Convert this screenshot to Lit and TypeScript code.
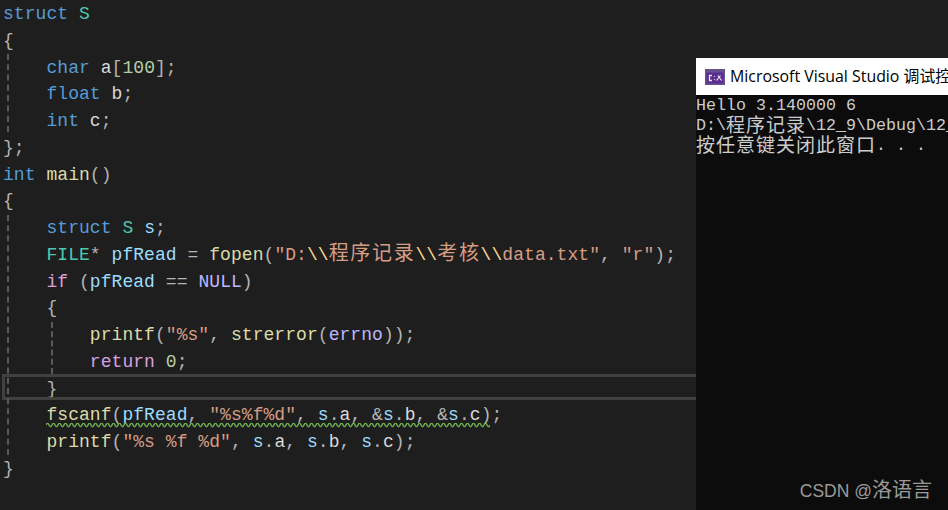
import { LitElement, html, css } from "lit";
import { customElement } from "lit/decorators.js";

type Tok = [string, string];
const K = "k", T = "t", F = "f", S = "s", V = "v", M = "m", C = "c", N = "n", P = "p", D = "d", E = "e", Z = "z";

const code: Tok[][] = [
  [[K, "struct"], [D, " "], [T, "S"]],
  [[P, "{"]],
  [[D, "    "], [K, "char"], [D, " a"], [P, "["], [N, "100"], [P, "];"]],
  [[D, "    "], [K, "float"], [D, " b"], [P, ";"]],
  [[D, "    "], [K, "int"], [D, " c"], [P, ";"]],
  [[P, "};"]],
  [[K, "int"], [D, " "], [F, "main"], [P, "()"]],
  [[P, "{"]],
  [[D, "    "], [K, "struct"], [D, " "], [T, "S"], [D, " "], [V, "s"], [P, ";"]],
  [[D, "    "], [T, "FILE"], [P, "*"], [D, " "], [V, "pfRead"], [D, " "], [P, "="], [D, " "], [F, "fopen"], [P, "("],
    [S, '"D:'], [E, "\\\\"], [Z, "程序记录"], [E, "\\\\"], [Z, "考核"], [E, "\\\\"], [S, 'data.txt"'], [P, ","], [D, " "], [S, '"r"'], [P, ");"]],
  [[D, "    "], [C, "if"], [D, " "], [P, "("], [V, "pfRead"], [D, " "], [P, "=="], [D, " "], [M, "NULL"], [P, ")"]],
  [[D, "    "], [P, "{"]],
  [[D, "        "], [F, "printf"], [P, "("], [S, '"%s"'], [P, ","], [D, " "], [F, "strerror"], [P, "("], [M, "errno"], [P, "));"]],
  [[D, "        "], [C, "return"], [D, " "], [N, "0"], [P, ";"]],
  [[D, "    "], [P, "}"]],
  [[D, "    "], [F, "fscanf"], [P, "("], [V, "pfRead"], [P, ","], [D, " "], [S, '"%s%f%d"'], [P, ","], [D, " "], [V, "s"], [P, "."], [D, "a"], [P, ","], [D, " "], [P, "&"], [V, "s"], [P, "."], [D, "b"], [P, ","], [D, " "], [P, "&"], [V, "s"], [P, "."], [D, "c"], [P, ");"]],
  [[D, "    "], [F, "printf"], [P, "("], [S, '"%s %f %d"'], [P, ","], [D, " "], [V, "s"], [P, "."], [D, "a"], [P, ","], [D, " "], [V, "s"], [P, "."], [D, "b"], [P, ","], [D, " "], [V, "s"], [P, "."], [D, "c"], [P, ");"]],
  [[P, "}"]],
];

const guides = [
  { x: 7, top: 54, h: 78 },
  { x: 7, top: 215, h: 240 },
  { x: 51, top: 322, h: 52 },
];

@customElement("app-root")
export class AppRoot extends LitElement {
  static styles = css`
    :host {
      display: flex;
      width: 948px;
      height: 510px;
      overflow: hidden;
      background: #1e1e1e;
    }
    .editor {
      position: relative;
      width: 696px;
      height: 510px;
      flex: none;
      box-sizing: border-box;
      padding: 1px 0 0 3px;
      font: 18px/26.75px "Liberation Mono", "Noto Sans CJK SC", monospace;
      letter-spacing: 0.05px;
      color: #dadada;
    }
    .line {
      height: 26.75px;
      white-space: pre;
    }
    .k { color: #569cd6; }
    .t { color: #4ec9b0; }
    .f { color: #dcdcaa; }
    .s { color: #d69d85; }
    .v { color: #9cdcfe; }
    .m { color: #beb7ff; }
    .c { color: #d8a0df; }
    .n { color: #b5cea8; }
    .p { color: #b4b4b4; }
    .d { color: #dadada; }
    .e { color: #ffd68f; }
    .z {
      color: #d69d85;
      font-family: "Noto Sans CJK SC", sans-serif;
      font-size: 20px;
      line-height: 1;
      letter-spacing: 1.7px;
    }
    .guide {
      position: absolute;
      width: 0;
      border-left: 2px dashed #5a5a5a;
    }
    .current {
      position: absolute;
      left: 2px;
      right: 0;
      top: 374px;
      height: 20px;
      border: 3px solid #404040;
      border-right: none;
    }
    .squiggle {
      position: absolute;
      left: 46px;
      top: 423px;
      display: block;
    }
    .right {
      flex: 1;
      min-width: 0;
      display: flex;
      flex-direction: column;
      padding-top: 58px;
    }
    .title {
      height: 37px;
      box-sizing: border-box;
      padding: 0 0 2px 9px;
      background: #fff;
      display: flex;
      align-items: center;
      gap: 5px;
      font: 15.9px "Open Sans", "Noto Sans CJK SC", sans-serif;
      color: #000;
      white-space: nowrap;
      overflow: hidden;
    }
    .title svg { flex: none; margin-top: 2px; }
    .console {
      flex: 1;
      background: #0c0c0c;
      color: #cccccc;
      display: flex;
      flex-direction: column;
      padding-top: 1px;
      font: 16.67px/20px "Liberation Mono", "Noto Sans CJK SC", monospace;
      overflow: hidden;
    }
    .cline {
      height: 20px;
      white-space: pre;
    }
    .cjk {
      display: inline-block;
      vertical-align: top;
      height: 20px;
      font-family: "Noto Sans CJK SC", sans-serif;
      font-size: 19px;
      line-height: 16px;
      letter-spacing: 1px;
    }
    .wm {
      margin-top: auto;
      align-self: flex-end;
      padding: 0 16px 7px 0;
      font: 17.5px/24px "Liberation Sans", "Noto Sans CJK SC", sans-serif;
      color: #9a9a9a;
    }
    .wm span {
      font-size: 20px;
    }
  `;

  private squiggle() {
    let d = "M0 2";
    for (let x = 0; x < 444; x += 6) {
      d += ` q1.5 -3.4 3 0 t3 0`;
    }
    return html`<svg class="squiggle" width="444" height="5" viewBox="0 0 444 5">
      <path d=${d} fill="none" stroke="#6fae4f" stroke-width="1.5" />
    </svg>`;
  }

  render() {
    return html`
      <div class="editor">
        <div class="current"></div>
        ${guides.map(
          (g) => html`<div class="guide" style="left:${g.x}px;top:${g.top}px;height:${g.h}px"></div>`
        )}
        ${code.map(
          (l) => html`<div class="line">${l.map(([c, t]) => html`<span class=${c}>${t}</span>`)}</div>`
        )}
        ${this.squiggle()}
      </div>
      <div class="right">
        <div class="title">
          <svg width="20" height="16" viewBox="0 0 20 16">
            <rect width="20" height="16" fill="#68508f" />
            <rect x="1.5" y="3.5" width="17" height="11" fill="#5c2d91" />
            <path d="M7 6.5 H4.5 V11.5 H7" fill="none" stroke="#e8e4f0" stroke-width="1.3" />
            <path d="M9.5 7v.8M9.5 10v.8" stroke="#e8e4f0" stroke-width="1.3" />
            <path d="M11.5 11.5 L15.5 6.5" stroke="#e8e4f0" stroke-width="1.2" />
            <path d="M13 6.5 L16.5 11.5" stroke="#e8e4f0" stroke-width="1.2" />
          </svg>
          <span>Microsoft Visual Studio 调试控制台</span>
        </div>
        <div class="console">
          <div class="cline">Hello 3.140000 6</div>
          <div class="cline">D:\\<span class="cjk">程序记录</span>\\12_9\\Debug\\12_9.exe</div>
          <div class="cline"><span class="cjk">按任意键关闭此窗口</span>. . .</div>
          <div class="wm">CSDN @<span>洛语言</span></div>
        </div>
      </div>
    `;
  }
}
